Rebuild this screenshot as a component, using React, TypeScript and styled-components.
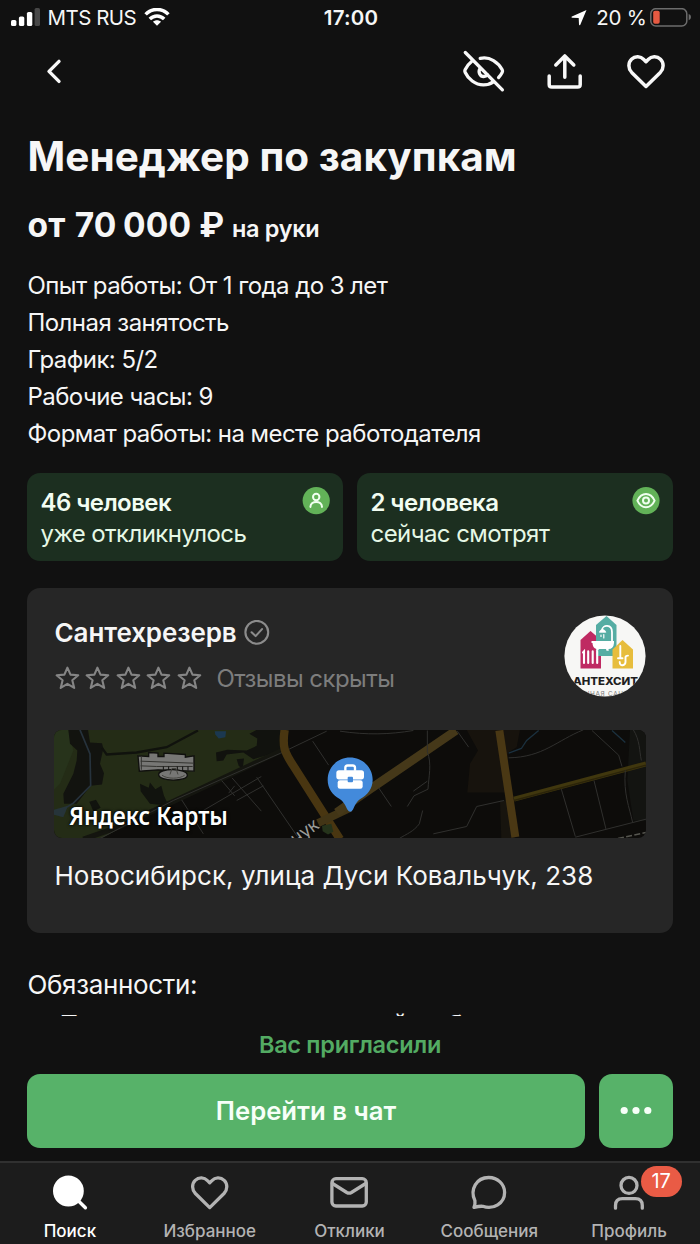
import React from "react";
import styled, { createGlobalStyle } from "styled-components";

const GlobalStyle = createGlobalStyle`
  * { box-sizing: border-box; }
  html, body { margin: 0; padding: 0; background: #111111; }
  body { font-family: Inter, "Noto Sans", sans-serif; color: #f6f6f6; }
`;

const Screen = styled.div`
  width: 700px;
  height: 1244px;
  display: flex;
  flex-direction: column;
  overflow: hidden;
  background: #111111;
`;

const Label = styled.span<{ $spacing?: number }>`
  letter-spacing: ${(p) => p.$spacing ?? 0}px;
  white-space: nowrap;
`;

const StatusBar = styled.header`
  height: 36px;
  flex: none;
  padding: 0 8px 0 11px;
  display: grid;
  grid-template-columns: 1fr auto 1fr;
  align-items: center;
  font-size: 20.5px;
  line-height: 36px;
`;

const StatusSide = styled.div<{ $end?: boolean }>`
  display: flex;
  align-items: center;
  justify-content: ${(p) => (p.$end ? "flex-end" : "flex-start")};
`;

const Carrier = styled.span`
  margin: 0 8px 0 6.5px;
  letter-spacing: -0.5px;
`;

const Charge = styled.span`
  margin: 0 3.5px 0 9px;
  letter-spacing: -0.3px;
`;

const Clock = styled.time`
  font-weight: 600;
  font-size: 20.5px;
  letter-spacing: 0.2px;
  margin-right: 1px;
`;

const NavBar = styled.nav`
  height: 70px;
  flex: none;
  padding: 1px 33px 0 40px;
  display: flex;
  align-items: center;
  justify-content: space-between;
`;

const NavActions = styled.div`
  display: flex;
  gap: 37.5px;
`;

const IconButton = styled.button`
  padding: 0;
  border: 0;
  background: none;
  color: #f8f8f8;
  display: flex;
  align-items: center;
`;

const Content = styled.main`
  height: 910px;
  flex: none;
  padding: 26px 27px 0;
  overflow: hidden;
`;

const Title = styled.h1`
  margin: 0;
  padding-left: 0.5px;
  font-size: 40.5px;
  line-height: 50px;
  font-weight: 700;
`;

const Salary = styled.div`
  margin-top: 18px;
  padding-left: 0.5px;
  display: flex;
  align-items: baseline;
  gap: 7.5px;
  font-size: 33.5px;
  line-height: 50px;
  font-weight: 700;
`;

const Amount = styled.span`
  margin-left: 1.2px;
  word-spacing: -1.6px;
  letter-spacing: 0.15px;
`;

const SalaryNote = styled.span`
  font-size: 23.5px;
  font-weight: 600;
`;

const Facts = styled.ul`
  list-style: none;
  margin: 12.5px 0 0;
  padding: 0 0 0 0.5px;
  font-size: 24px;
  line-height: 37.2px;
`;

const Stats = styled.div`
  margin-top: 20.5px;
  display: grid;
  grid-template-columns: 1fr 1fr;
  gap: 14px;
`;

const StatCard = styled.div`
  height: 87.5px;
  padding: 14px 13px 0 13.5px;
  border-radius: 13px;
  background: #1c2f20;
  color: #e6f8e6;
  display: flex;
  justify-content: space-between;
  font-size: 24px;
  line-height: 31px;
`;

const StatText = styled.div`
  display: flex;
  flex-direction: column;
`;

const StatCount = styled.strong`
  font-weight: 600;
  color: #f2fdf2;
`;

const Company = styled.section`
  margin-top: 27.5px;
  height: 345px;
  padding: 27px;
  border-radius: 13px;
  background: #262626;
`;

const CompanyHead = styled.div`
  height: 82px;
  display: flex;
  justify-content: space-between;
`;

const CompanyRow = styled.div`
  height: 36px;
  margin-bottom: 9.5px;
  display: flex;
  align-items: center;
  padding-left: 0.5px;
`;

const CompanyName = styled.h2`
  margin: 0 7px 0 0;
  font-size: 26px;
  line-height: 36px;
  font-weight: 600;
`;

const Reviews = styled.span`
  margin-left: 9.5px;
  font-size: 24px;
  color: #7d7d7d;
`;

const MapPreview = styled.div`
  position: relative;
  height: 108.5px;
  margin-top: 32.5px;
  border-radius: 8px;
  overflow: hidden;
  background: #0d0c0a;
  svg { display: block; }
`;

const MapCaption = styled.span`
  position: absolute;
  left: 15px;
  bottom: 6px;
  font-family: "Noto Sans", sans-serif;
  font-size: 25.5px;
  line-height: 34px;
  font-weight: 600;
  color: #ffffff;
  text-shadow: 0 0 4px #000, 0 0 2px #000;
  transform: scaleX(0.89);
  transform-origin: left center;
`;

const Address = styled.p`
  margin: 20px 0 0 0.5px;
  font-size: 26px;
  line-height: 36px;
`;

const Description = styled.section`
  margin-top: 33px;
  padding-left: 0.5px;
  font-size: 26px;
  line-height: 37px;
`;

const Duties = styled.ul`
  list-style: none;
  margin: 2.5px 0 0;
  padding: 0 0 0 32px;
`;

const ActionPanel = styled.section`
  height: 145px;
  flex: none;
  padding: 11px 27px 0;
`;

const Invited = styled.div`
  height: 36px;
  font-size: 23.5px;
  line-height: 36px;
  font-weight: 600;
  text-align: center;
  color: #53ab63;
`;

const Buttons = styled.div`
  margin-top: 10.5px;
  height: 74px;
  display: flex;
  gap: 13.5px;
`;

const Button = styled.button<{ $square?: boolean }>`
  border: 0;
  padding: 0;
  flex: ${(p) => (p.$square ? "0 0 74.5px" : "1")};
  border-radius: 13px;
  background: #57b269;
  color: #f7fff8;
  font: 600 25.7px/74px Inter, sans-serif;
  display: flex;
  align-items: center;
  justify-content: center;
`;

const TabBar = styled.nav`
  height: 83px;
  flex: none;
  padding-right: 1px;
  border-top: 2px solid #303030;
  background: #1c1c1c;
  display: grid;
  grid-template-columns: repeat(5, 1fr);
`;

const Tab = styled.a<{ $active?: boolean }>`
  position: relative;
  padding-top: 8px;
  display: flex;
  flex-direction: column;
  align-items: center;
  color: ${(p) => (p.$active ? "#ffffff" : "#b3b3b3")};
  font-size: 17px;
  line-height: 22px;
  font-weight: 500;
  svg { margin-bottom: 5px; flex: none; }
`;

const Badge = styled.span`
  position: absolute;
  left: 81.5px;
  top: 3px;
  width: 41px;
  height: 31px;
  border-radius: 16px;
  background: #e95b45;
  color: #fff;
  font-size: 20px;
  line-height: 31px;
  font-weight: 400;
  text-align: center;
`;

const line = {
  fill: "none",
  stroke: "currentColor",
  strokeLinecap: "round" as const,
  strokeLinejoin: "round" as const,
};

const HEART =
  "M21 36.2 L6.7 22.1 C3 18.2 3 12.4 6.5 9 C10.2 5.3 15.6 5.8 18.8 9.2 L21 11.4 L23.2 9.2 C26.4 5.8 31.8 5.3 35.5 9 C39 12.4 39 18.2 35.3 22.1 Z";

const Signal = () => (
  <svg width="30" height="20" viewBox="0 0 30 20">
    <rect x="0" y="12" width="5.4" height="6" rx="1.6" fill="#fff" />
    <rect x="7.9" y="8.5" width="5.4" height="9.5" rx="1.6" fill="#fff" />
    <rect x="15.9" y="4" width="5.4" height="14" rx="1.6" fill="#fff" />
    <rect x="23.6" y="0" width="5.4" height="18" rx="1.6" fill="#474747" />
  </svg>
);

const Wifi = () => (
  <svg width="26" height="20" viewBox="0 0 26 20" fill="none" stroke="#fff" strokeWidth="3.5">
    <path d="M1.6 6.4 C8 -0.2 18 -0.2 24.4 6.4" />
    <path d="M5.8 11 C10 6.9 16 6.9 20.2 11" />
    <path d="M13 17.8 L9 13.8 C11.2 11.8 14.8 11.8 17 13.8 Z" fill="#fff" stroke="none" />
  </svg>
);

const Location = () => (
  <svg width="16" height="16" viewBox="0 0 16 16">
    <path d="M15.5 0 L9.2 14.9 Q8.4 15.7 8 14.5 L7.7 8 L1.2 7.8 Q-0.1 7.4 0.9 6.6 Z" fill="#fff" />
  </svg>
);

const Battery = () => (
  <svg width="42" height="20" viewBox="0 0 42 20">
    <rect x="0.8" y="0.7" width="36" height="17.3" rx="5" fill="none" stroke="#6c6c6c" strokeWidth="1.5" />
    <rect x="3.2" y="2.8" width="6.5" height="13" rx="1.8" fill="#e65a42" />
    <path d="M38.7 6 Q41 6.6 41 9.1 Q41 11.6 38.7 12.2 Z" fill="#6c6c6c" />
  </svg>
);

const Back = () => (
  <svg width="28" height="28" viewBox="0 0 28 28" {...line} strokeWidth="3.4">
    <path d="M19 3.4 L9 13.4 L19 23.4" />
  </svg>
);

const EyeOff = () => (
  <svg width="44" height="44" viewBox="0 0 44 44" {...line} strokeWidth="3.3">
    <path d="M3.3 2.5 L40.4 39.8" />
    <path d="M9.6 11.5 C6.6 13.8 4.4 17.1 3.1 19.8 Q2.5 21 3.1 22.2 C6.1 28.8 13 34.9 21.4 34.9 C25.3 34.9 28.7 33.8 31.3 31.9" />
    <path d="M18.2 8.4 C28 6 36.5 12.8 40.2 19.8 Q40.9 21.1 40.2 22.4 C39.2 24.5 38 26.1 36.6 27.5" />
    <path d="M17.9 18.9 C15.9 22.1 18.1 26.5 21.7 26.5 C23.2 26.5 24.5 25.9 25.4 24.7" />
  </svg>
);

const Share = () => (
  <svg width="44" height="44" viewBox="0 0 44 44" {...line} strokeWidth="3.5">
    <path d="M20.8 27.3 V6.5 M11.8 14.9 L20.8 5.9 L29.8 14.9" />
    <path d="M5.2 26 V34.4 Q5.2 37 7.8 37 H33.6 Q36.2 37 36.2 34.4 V26" />
  </svg>
);

const Heart = () => (
  <svg width="42" height="42" viewBox="0 0 42 42" {...line} strokeWidth="3.5">
    <path transform="translate(0 -0.7)" d={HEART} />
  </svg>
);

const PersonDot = () => (
  <svg width="28" height="28" viewBox="0 0 28 28" {...line} strokeWidth="2">
    <circle cx="14.2" cy="13.6" r="13.6" fill="#62b258" stroke="none" />
    <g stroke="#f0fff0">
      <circle cx="14.2" cy="10" r="3.2" />
      <path d="M8.4 19.9 C8.6 13.2 19.8 13.2 20 19.9" />
    </g>
  </svg>
);

const EyeDot = () => (
  <svg width="28" height="28" viewBox="0 0 28 28" {...line} strokeWidth="2">
    <circle cx="14" cy="13.6" r="13.6" fill="#62b258" stroke="none" />
    <g stroke="#f0fff0">
      <path d="M5.4 13.6 C9.4 4.8 18.6 4.8 22.6 13.6 C18.6 22.4 9.4 22.4 5.4 13.6 Z" />
      <circle cx="14" cy="13.6" r="3" />
    </g>
  </svg>
);

const Verified = () => (
  <svg width="26" height="26" viewBox="0 0 26 26" fill="none" stroke="#8c8c8c" strokeWidth="2.1">
    <circle cx="12.8" cy="12.3" r="11.4" />
    <path d="M7.6 12.3 L11.6 16.1 L18 9.1" strokeLinecap="round" strokeLinejoin="round" />
  </svg>
);

const Star = () => (
  <svg width="30.5" height="28" viewBox="0 0 30.5 28" fill="none" stroke="#858585" strokeWidth="2.1">
    <path
      d="M12.4 2.6 L15.5 9.6 L23.2 10.3 L17.3 15.3 L19.2 22.9 L12.4 18.9 L5.7 22.9 L7.6 15.3 L1.6 10.3 L9.4 9.6 Z"
      strokeLinejoin="round"
    />
  </svg>
);

const CompanyLogo = () => (
  <svg width="82" height="82" viewBox="0 0 82 82">
    <defs>
      <clipPath id="logo-round">
        <circle cx="41" cy="41" r="40.6" />
      </clipPath>
    </defs>
    <g clipPath="url(#logo-round)">
      <rect width="82" height="82" fill="#f7f7f5" />
      <path d="M16.5 25 L26.5 16 L37 25 V53.5 H16.5 Z" fill="#bf2a62" />
      <path d="M32 10 L42.5 1 L52.5 10 V41 H32 Z" fill="#55ada3" />
      <path d="M48.5 34.5 L58.5 25 L69 34.5 V53.5 H48.5 Z" fill="#e7bd3d" />
      <g fill="none" stroke="#fff" strokeLinecap="round">
        <path d="M19 37.4 L20 36.4 V48 M24.2 36.4 V48 M28.7 36.4 V48 M33.2 36.4 V48" strokeWidth="2.1" />
        <path d="M38 15 C38.5 9.5 48 9 48 17 V26" strokeWidth="1.8" />
        <path d="M35.5 17 C36 13.6 41 13.6 41.7 17 Z" fill="#fff" strokeWidth="0.8" />
        <path d="M37 20 V21.5 M39.8 19.5 V23" strokeWidth="1.2" />
        <path d="M56.3 31 V43 M54 43.3 H58.5 M55.7 47 C55.7 52 61.5 50.5 61.5 47 V42.5 Q61.5 40.6 64 40.6" strokeWidth="1.9" />
      </g>
      <path d="M27.5 26 H50 V28 Q49.5 34 44.5 34 L44.8 35.8 H42.5 L42 34 H35 L34 35.8 H31.8 L32.5 34 Q28.5 33 28.5 28 H27.5 Z" fill="#fff" />
      <text
        x="9"
        y="70.2"
        textLength="65"
        lengthAdjust="spacingAndGlyphs"
        fontFamily="Inter"
        fontWeight="800"
        fontSize="10.2"
        fill="#1e1e1e"
      >
        АНТЕХСИТ
      </text>
      <text x="42" y="80.6" textAnchor="middle" fontFamily="Inter" fontSize="6.4" letterSpacing="0.7" fill="#777">
        НОЧНАЯ САНТЕХ
      </text>
    </g>
  </svg>
);

const MapDrawing = () => (
  <svg width="592" height="109" viewBox="0 0 592 109">
    <g transform="translate(-14 -9.5) scale(.33333)">
      <path d="M40 28 H720 L722 92 L400 240 L180 356 H40 Z" fill="#242c16" />
      <path d="M40 28 H85 L100 90 L60 190 L40 210 Z" fill="#27331b" />
      <path d="M85 28 H144 L150 66 L186 68 L190 84 L180 130 L192 158 L186 192 L152 196 L110 250 H72 L70 220 L100 160 L110 120 L112 90 L90 70 Z" fill="#12130f" />
      <path d="M120 28 L150 100 L152 195 L100 248 L44 282" fill="none" stroke="#26323c" strokeWidth="5" />
      <path d="M40 268 L84 256 L70 290 L40 282 Z" fill="#26343a" />
      <path d="M186 82 L200 102 L290 96 L380 80 L474 30" fill="none" stroke="#10120d" strokeWidth="7" />
      <path d="M300 190 L326 202 L330 186 L346 206 L364 196 L372 226 L386 256 L330 250 L302 212 Z" fill="#11130e" />
      <path d="M148 244 L168 238 L182 262 L160 272 Z" fill="#11130e" />
      <path d="M528 96 L562 88 L620 90 L650 76 L652 54 L628 40 L650 28 H722 L722 92 L640 116 L610 96 L560 102 L550 120 L530 122 Z M590 116 L612 114 L608 146 L596 136 Z" fill="#11120e" />
      <path d="M524 32 L558 32 L556 50 L536 54 L526 42 Z" fill="#1b3850" />
      <path d="M130 356 L240 318 L722 92" fill="none" stroke="#14150f" strokeWidth="16" />
      <g fill="none" stroke="#30302e" strokeWidth="3">
        <path d="M180 354 L400 240 L722 98 L860 32 M425 238 L490 340 M490 270 L664 168 M545 180 L584 226 M576 172 L664 272 M650 170 L772 348 M510 278 L534 302 M818 62 L866 134 M566 218 L584 196 M590 240 L670 196" />
      </g>
      <path d="M734 28 C726 80 734 96 760 136 L900 356" fill="none" stroke="#493611" strokeWidth="25" />
      <path d="M834 308 L930 262" fill="none" stroke="#423516" strokeWidth="24" />
      <path d="M846 316 L874 310 L880 334 L864 342 L848 332 Z" fill="#25331b" />
      <g fill="#777775" stroke="#10100e" strokeWidth="4">
        <path d="M294 106 L326 108 V96 L354 98 V108 H372 V98 L436 102 V110 L462 106 V152 L354 148 L298 152 Z" />
        <path d="M356 162 C356 142 442 142 442 164 C442 184 356 184 356 162 Z" />
        <path d="M302 122 L460 128 M302 136 L350 138 M304 108 V148 M350 138 H458" fill="none" stroke="#33332f" strokeWidth="3" />
        <path d="M370 138 V148 M386 138 V148 M412 138 V148 M428 138 V150 M444 138 V150" fill="none" strokeWidth="3" />
        <path d="M390 162 L396 144 H408 L414 162 M366 164 C380 176 420 176 434 164" fill="none" stroke="#44443f" strokeWidth="3" />
      </g>
      <text transform="translate(768 374) rotate(-36)" fontFamily="Noto Sans" fontSize="55" fill="#9b9b98">чук</text>
    </g>
    <g transform="translate(286 -9.5) scale(.33333)">
      <path d="M380 28 H540 L530 80 L504 96 L500 216 H382 L390 130 L414 90 Z" fill="#17130d" />
      <path d="M480 240 H510 L525 356 H484 Z" fill="#17140e" />
      <path d="M870 28 H920 V300 H880 L862 180 Z" fill="#131411" />
      <path d="M-10 276 L90 206 L348 30" fill="none" stroke="#453819" strokeWidth="26" />
      <path d="M522 236 L918 130" fill="none" stroke="#40370e" strokeWidth="15" />
      <path d="M522 240 L918 134" fill="none" stroke="#2b240a" strokeWidth="4" />
      <path d="M478 30 L526 350" fill="none" stroke="#4a3814" strokeWidth="24" />
      <g fill="none" stroke="#30302e" strokeWidth="3">
        <path d="M0 32 C80 44 150 42 220 30 M262 30 V94 C276 130 266 170 264 206 L222 226 L202 258 M220 212 L262 182 M352 32 L386 80 M116 202 L154 258 M248 270 L238 310 C220 334 200 340 178 354 M280 340 L380 318 L410 258 L492 240 M506 112 C610 110 650 60 730 28 M756 30 L836 104 L846 138 M880 28 C900 60 898 90 904 120 M856 150 C850 220 868 260 878 306 M664 206 L706 348 M762 180 L798 326 M706 350 L918 296" />
      </g>
      <path d="M506 98 L544 84 L560 60 L596 30 M816 30 L856 66" fill="none" stroke="#1b303e" strokeWidth="4" />
      <path d="M834 354 L918 336" stroke="#55554f" strokeWidth="5" strokeDasharray="18 7" />
      <path
        d="M30 111 C68 111 98 141 98 178 C98 205 82 224 62 235 C50 243 46 252 39 267 Q31 280 22 267 C15 252 10 243 -2 235 C-22 224 -37 205 -37 178 C-37 141 -8 111 30 111 Z"
        fill="#438adb"
      />
      <path d="M16 151 V142 Q16 135 23 135 H38 Q45 135 45 142 V151" fill="none" stroke="#fff" strokeWidth="7" />
      <rect x="-11" y="149" width="83" height="28" rx="8" fill="#fff" />
      <rect x="-7" y="179" width="75" height="26" rx="7" fill="#fff" />
      <rect x="23" y="169" width="16" height="16" rx="3" fill="#438adb" />
    </g>
  </svg>
);

const Dots = () => (
  <svg width="34" height="10" viewBox="0 0 34 10" fill="#f7fff8">
    <circle cx="5.2" cy="4.5" r="3.6" />
    <circle cx="17" cy="4.5" r="3.6" />
    <circle cx="28.8" cy="4.5" r="3.6" />
  </svg>
);

const SearchIcon = () => (
  <svg width="44" height="44" viewBox="0 0 44 44" {...line}>
    <circle cx="20.4" cy="20" r="15.4" fill="currentColor" stroke="none" />
    <path d="M30 29.5 L37.4 36.8" strokeWidth="3.4" />
  </svg>
);

const TabHeart = () => (
  <svg width="44" height="44" viewBox="0 0 44 44" {...line} strokeWidth="3.3">
    <path transform="translate(0.7 0.4)" d={HEART} />
  </svg>
);

const Mail = () => (
  <svg width="44" height="44" viewBox="0 0 44 44" {...line} strokeWidth="3.3">
    <rect x="4.9" y="7.7" width="34.4" height="27.3" rx="4" />
    <path d="M5.5 12.5 L19.8 21.5 Q22.1 22.8 24.4 21.5 L38.7 12.5" />
  </svg>
);

const Chat = () => (
  <svg width="44" height="44" viewBox="0 0 44 44" {...line} strokeWidth="3.3">
    <path d="M7 36.4 Q8.4 33 7.9 29.6 C2.6 18.5 9.5 6.5 21.7 6.5 C30.7 6.5 37.6 13.2 37.6 21.4 C37.6 32 26.5 39.2 15.8 35.3 Q12.5 35 7 36.4 Z" />
  </svg>
);

const Profile = () => (
  <svg width="44" height="44" viewBox="0 0 44 44" {...line} strokeWidth="3.3">
    <circle cx="22" cy="14.4" r="8" />
    <path d="M8.5 37.2 V34.5 Q8.5 27.6 15.4 27.6 H28.4 Q35.3 27.6 35.3 34.5 V37.2" />
  </svg>
);

const facts = [
  "Опыт работы: От 1 года до 3 лет",
  "Полная занятость",
  "График: 5/2",
  "Рабочие часы: 9",
  "Формат работы: на месте работодателя",
];

const stats = [
  { count: "46 человек", note: "уже откликнулось", icon: <PersonDot /> },
  { count: "2 человека", note: "сейчас смотрят", icon: <EyeDot /> },
];

const tabs = [
  { name: "Поиск", icon: <SearchIcon />, active: true },
  { name: "Избранное", icon: <TabHeart /> },
  { name: "Отклики", icon: <Mail /> },
  { name: "Сообщения", icon: <Chat /> },
  { name: "Профиль", icon: <Profile />, badge: 17 },
];

export default function App() {
  return (
    <Screen>
      <GlobalStyle />
      <StatusBar>
        <StatusSide>
          <Signal />
          <Carrier>MTS RUS</Carrier>
          <Wifi />
        </StatusSide>
        <Clock>17:00</Clock>
        <StatusSide $end>
          <Location />
          <Charge>20 %</Charge>
          <Battery />
        </StatusSide>
      </StatusBar>

      <NavBar>
        <IconButton aria-label="Назад"><Back /></IconButton>
        <NavActions>
          <IconButton aria-label="Скрыть"><EyeOff /></IconButton>
          <IconButton aria-label="Поделиться"><Share /></IconButton>
          <IconButton aria-label="В избранное"><Heart /></IconButton>
        </NavActions>
      </NavBar>

      <Content>
        <Title><Label $spacing={0.03}>Менеджер по закупкам</Label></Title>
        <Salary>
          <Label $spacing={0.15}>от <Amount>70 000</Amount> ₽</Label>
          <SalaryNote><Label $spacing={-0.3}>на руки</Label></SalaryNote>
        </Salary>
        <Facts>
          {facts.map((text) => (
            <li key={text}><Label $spacing={-0.56}>{text}</Label></li>
          ))}
        </Facts>

        <Stats>
          {stats.map((stat) => (
            <StatCard key={stat.count}>
              <StatText>
                <StatCount><Label $spacing={-0.58}>{stat.count}</Label></StatCount>
                <Label $spacing={-0.58}>{stat.note}</Label>
              </StatText>
              {stat.icon}
            </StatCard>
          ))}
        </Stats>

        <Company>
          <CompanyHead>
            <div>
              <CompanyRow>
                <CompanyName><Label $spacing={-0.1}>Сантехрезерв</Label></CompanyName>
                <Verified />
              </CompanyRow>
              <CompanyRow>
                {[0, 1, 2, 3, 4].map((i) => <Star key={i} />)}
                <Reviews><Label $spacing={-0.55}>Отзывы скрыты</Label></Reviews>
              </CompanyRow>
            </div>
            <CompanyLogo />
          </CompanyHead>
          <MapPreview>
            <MapDrawing />
            <MapCaption><Label>Яндекс Карты</Label></MapCaption>
          </MapPreview>
          <Address><Label $spacing={0.05}>Новосибирск, улица Дуси Ковальчук, 238</Label></Address>
        </Company>

        <Description>
          <Label $spacing={-0.33}>Обязанности:</Label>
          <Duties>
            <li><Label $spacing={0.33}>Проведение ежемесячной работы</Label></li>
          </Duties>
        </Description>
      </Content>

      <ActionPanel>
        <Invited><Label $spacing={-0.3}>Вас пригласили</Label></Invited>
        <Buttons>
          <Button><Label>Перейти в чат</Label></Button>
          <Button $square aria-label="Ещё"><Dots /></Button>
        </Buttons>
      </ActionPanel>

      <TabBar>
        {tabs.map((tab) => (
          <Tab key={tab.name} $active={tab.active}>
            {tab.icon}
            <Label>{tab.name}</Label>
            {tab.badge && <Badge>{tab.badge}</Badge>}
          </Tab>
        ))}
      </TabBar>
    </Screen>
  );
}
